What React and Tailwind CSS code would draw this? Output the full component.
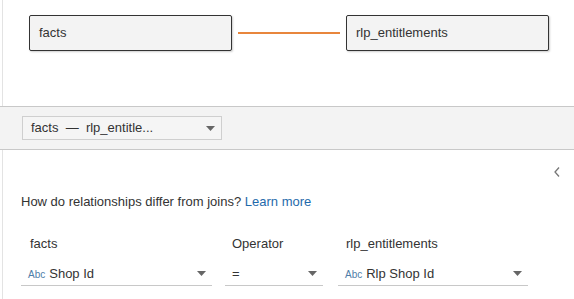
import React from "react";

const Caret = ({ className = "" }) => (
  <svg width="9" height="5" viewBox="0 0 9 5" className={className}>
    <path d="M0 0 H9 L4.5 5 Z" fill="#666" />
  </svg>
);

const TableBox = ({ name }) => (
  <div className="w-[203px] h-[36px] bg-[#f3f3f3] border border-[#333] rounded-[2px] shadow-[1px_1px_2px_rgba(0,0,0,0.2)] flex items-center px-[9px] text-[13px] text-[#333]">
    {name}
  </div>
);

const FieldSelect = ({ width, type, value }) => (
  <div
    className={`${width} h-[24px] border-b border-[#c8c8c8] flex items-center pl-[7px] pr-[6px]`}
  >
    {type && (
      <span className="text-[10px] text-[#4f7ea8] mr-[4px] mt-[1px]">Abc</span>
    )}
    <span className="flex-1 text-[13px] text-[#333]">{value}</span>
    <Caret />
  </div>
);

export default function App() {
  return (
    <div
      className="w-[574px] h-[299px] bg-white overflow-hidden"
      style={{ fontFamily: '"Liberation Sans", Arial, sans-serif' }}
    >
      {/* canvas */}
      <div className="h-[106px] ml-[2px] border-l border-[#e3e3e3] flex items-start pt-[15px] pl-[26px]">
        <TableBox name="facts" />
        <div className="w-[102px] h-[2px] bg-[#e8863c] mx-[6px] mt-[17px]" />
        <TableBox name="rlp_entitlements" />
      </div>

      {/* toolbar */}
      <div className="h-[44px] bg-[#f3f3f3] border-y border-[#c8c8c8] flex items-center pl-[22px]">
        <div className="w-[200px] h-[24px] border border-[#cfcfcf] bg-[#f5f5f5] flex items-center pl-[8px] pr-[6px] text-[13px] text-[#333]">
          <span className="flex-1 whitespace-pre">facts  —  rlp_entitle...</span>
          <Caret />
        </div>
      </div>

      {/* details */}
      <div className="ml-[2px] border-l border-[#e3e3e3] h-[150px] pl-[18px] pr-[14px]">
        <div className="flex justify-end pt-[17px]">
          <svg width="6" height="10" viewBox="0 0 6 10">
            <path d="M5 0.5 L1 5 L5 9.5" fill="none" stroke="#777" strokeWidth="1.3" />
          </svg>
        </div>
        <p className="mt-[15px] text-[13px] text-[#333]">
          How do relationships differ from joins?{" "}
          <span className="text-[#1f6aab]">Learn more</span>
        </p>
        <div className="flex mt-[22px] text-[13px] text-[#333]">
          <div className="w-[191px] pl-[9px]">facts</div>
          <div className="w-[13px]" />
          <div className="w-[98px] pl-[7px]">Operator</div>
          <div className="w-[15px]" />
          <div className="pl-[8px]">rlp_entitlements</div>
        </div>
        <div className="flex mt-[9px]">
          <FieldSelect width="w-[191px]" type value="Shop Id" />
          <div className="w-[13px]" />
          <FieldSelect width="w-[98px]" value="=" />
          <div className="w-[15px]" />
          <FieldSelect width="w-[190px]" type value="Rlp Shop Id" />
        </div>
      </div>
    </div>
  );
}
